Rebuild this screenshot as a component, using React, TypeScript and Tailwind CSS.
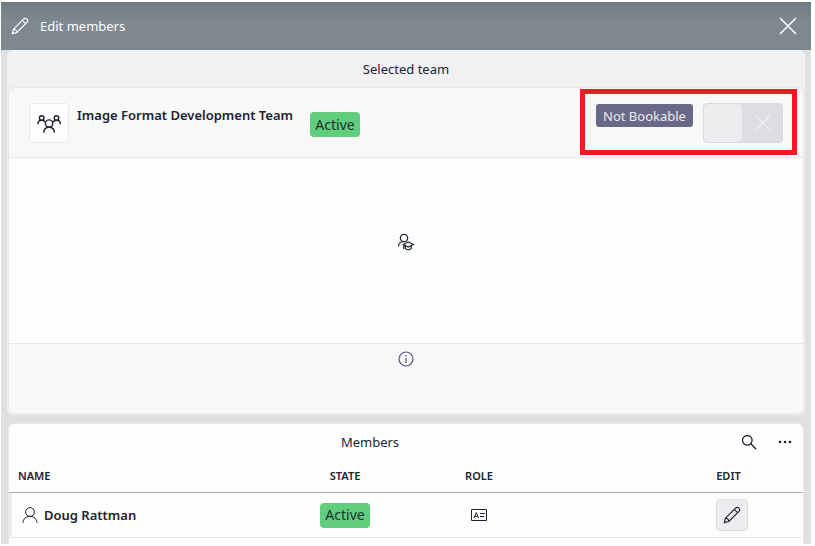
import type { ReactNode } from "react";

type IconProps = { className?: string };

function Icon({ size = 16, width = 1, className = "", children }: { size?: number; width?: number; className?: string; children: ReactNode }) {
  return (
    <svg aria-hidden="true" width={size} height={size} viewBox={`0 0 ${size} ${size}`} fill="none" stroke="currentColor" strokeWidth={width} className={`shrink-0 ${className}`}>
      {children}
    </svg>
  );
}

function PencilIcon({ className }: IconProps) {
  return (
    <Icon size={18} width={1.2} className={className}>
      <path d="M1.4 16.600 2.500 12.200 12.600 2.100a2.300 2.300 0 0 1 3.300 3.300L5.800 15.500Z" />
      <path d="M11.300 3.400l3.300 3.300M2.500 12.200c1.700 0 3.300 1.600 3.300 3.300" />
    </Icon>
  );
}

function TeamIcon() {
  return (
    <Icon size={24} width={1.4}>
      <circle cx="4.700" cy="7" r="2.300" />
      <circle cx="19.500" cy="7" r="2.300" />
      <circle cx="12.100" cy="12.600" r="3.700" />
      <path d="M.8 13.200c0-2.400 1.500-3.900 3.900-3.900 1.700 0 2.900.8 4 2.100M23.400 13.200c0-2.400-1.500-3.900-3.900-3.900-1.700 0-2.900.8-4 2.100M6.700 21.800c.2-3.300 2.300-5.500 5.400-5.500s5.200 2.200 5.400 5.500" />
    </Icon>
  );
}

function GraduateIcon() {
  return (
    <Icon size={18} width={1.2}>
      <circle cx="7" cy="5" r="3.700" />
      <path d="M1.500 13.500C1.500 10.700 3.700 8.700 6.300 8.700" />
      <path d="M6.300 11.500 11.300 9l5 2.500-5 2.500ZM6.700 11.800v4.200M8.300 12.800v2.500c1.700 1.900 4.300 1.900 6 0v-2.500" />
    </Icon>
  );
}

function Badge() {
  return <span className="flex h-[25px] w-[50px] items-center justify-center rounded bg-[#60ce7c] text-[14px] text-[#20302f]">Active</span>;
}

export default function App() {
  return (
    <div className="h-screen bg-white pt-[2px] pr-1 pb-[2px] pl-px font-['Noto_Sans',sans-serif] text-[13px] leading-5 text-[#20242e]">
      <div className="flex h-full flex-col overflow-hidden bg-[#e0e0e0]">
        <header className="flex h-12 shrink-0 items-center justify-between bg-linear-to-b from-[#717b82] to-[#7e8890] to-40% pr-[11px] pl-[10px] text-white">
          <div className="flex items-center gap-[11px]">
            <PencilIcon />
            <h1>Edit members</h1>
          </div>
          <button type="button" aria-label="Close" className="flex size-6 items-center justify-center">
            <Icon size={18} width={1.5}><path d="m1 1 16 16M17 1 1 17" /></Icon>
          </button>
        </header>

        <main className="flex grow flex-col gap-2 px-[6px]">
          <section className="rounded-md bg-[#f1f1f1] px-px pb-px">
            <h2 className="flex h-[37px] items-center justify-center">Selected team</h2>
            <div className="overflow-hidden rounded-md border border-[#e7e7e9] bg-[#f8f8f8]">
              <div className="relative flex h-[70px] items-start border-b border-[#e7e7e9] py-[15px] pr-5 pl-5">
                <div className="flex size-10 items-center justify-center rounded border border-[#e9e9ed] bg-[#fdfdfd]">
                  <TeamIcon />
                </div>
                <h3 className="ml-2 w-[233px] pt-[2px] font-semibold whitespace-nowrap">Image Format Development Team</h3>
                <div className="pt-[9px]"><Badge /></div>
                <div className="ml-auto flex items-start gap-[10px]">
                  <label htmlFor="bookable" className="mt-px flex h-[23px] w-[97px] items-center justify-center rounded-[3px] bg-[#686887] whitespace-nowrap text-[#ebebef]">Not Bookable</label>
                  <div className="relative h-10 w-20">
                    <input id="bookable" type="checkbox" role="switch" disabled className="block h-10 w-20 appearance-none rounded border border-[#d9dbe2] bg-[#dcdee3] before:block before:h-[38px] before:w-[38px] before:rounded before:bg-[#ededef]" />
                    <Icon size={16} width={1.2} className="pointer-events-none absolute top-3 right-3 text-[#f0f0f3]"><path d="m1 1 14 14M15 1 1 15" /></Icon>
                  </div>
                </div>
                <div className="pointer-events-none absolute top-px right-[6px] h-[66px] w-[217px] border-5 border-[#ed1c24]" />
              </div>
              <div className="flex h-[186px] items-start justify-center border-b border-[#e7e7e9] bg-[#fdfdfd] pt-[75px]">
                <GraduateIcon />
              </div>
              <div className="flex h-[69px] items-start justify-center pt-[7px] text-[#55557d]">
                <Icon size={16} width={1.2}>
                  <circle cx="8" cy="8" r="7" />
                  <path d="M8 7v5M8 4v1.500" />
                </Icon>
              </div>
            </div>
          </section>

          <section className="mx-px grow rounded-t-md border border-b-0 border-[#e7e7e9] bg-[#fdfdfd]">
            <div className="flex h-9 items-center">
              <h2 className="grow text-center">Members</h2>
              <button type="button" aria-label="Search" className="flex size-9 items-center justify-center">
                <Icon width={1.3}><circle cx="6.300" cy="6.300" r="4.800" /><path d="m9.800 9.800 5.400 5.400" /></Icon>
              </button>
              <button type="button" aria-label="More" className="flex size-9 items-center justify-center">
                <Icon><g fill="currentColor" stroke="none"><circle cx="3" cy="8" r="1.300" /><circle cx="8" cy="8" r="1.300" /><circle cx="13" cy="8" r="1.300" /></g></Icon>
              </button>
            </div>
            <table className="w-full table-fixed border-separate border-spacing-0">
              <thead>
                <tr className="h-[33px] text-[11px] *:border-b *:border-[#a6abb2] *:p-0 *:font-semibold">
                  <th scope="col"><div className="pl-[9px] text-left">NAME</div></th>
                  <th scope="col" className="w-[134px]">STATE</th>
                  <th scope="col" className="w-[242px]"><div className="w-[134px]">ROLE</div></th>
                  <th scope="col" className="w-[149px]">EDIT</th>
                </tr>
              </thead>
              <tbody>
                <tr className="h-[45px] *:border-b *:border-[#e7e7e9] *:p-0">
                  <td>
                    <div className="flex h-11 items-center gap-[6px] border-l-3 border-[#ebebf0] pl-[10px] font-semibold">
                      <Icon><circle cx="8" cy="5" r="4.400" /><path d="M1 15.900c0-3.900 3-6.500 7-6.500s7 2.600 7 6.500" /></Icon>
                      Doug Rattman
                    </div>
                  </td>
                  <td><div className="flex justify-center"><Badge /></div></td>
                  <td>
                    <div className="flex w-[134px] justify-center">
                      <Icon>
                        <path d="M.5 2.500h15v11H.5ZM3 11l2.300-5.500L7.600 11M3.800 9.300h3M9 6.500h5M9 9.500h4" />
                      </Icon>
                    </div>
                  </td>
                  <td>
                    <div className="flex justify-center pl-[6px]">
                      <button type="button" aria-label="Edit Doug Rattman" className="flex size-8 items-center justify-center rounded border border-[#dcdde3] bg-[#ededf0]"><PencilIcon /></button>
                    </div>
                  </td>
                </tr>
              </tbody>
            </table>
          </section>
        </main>
      </div>
    </div>
  );
}
